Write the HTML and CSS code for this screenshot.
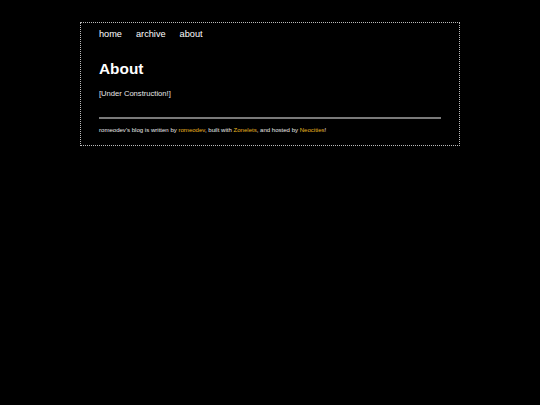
FILE: index.html
```html
<!DOCTYPE html>
<html>
<head>
<meta charset="utf-8">
<title>About</title>
<link rel="stylesheet" href="styles.css">
</head>
<body>
<div class="container">
  <nav class="nav">
    <a href="#">home</a>
    <a href="#">archive</a>
    <a href="#">about</a>
  </nav>
  <main class="content">
    <h1 class="title">About</h1>
    <p class="text">[Under Construction!]</p>
  </main>
  <footer class="footer">
    <hr class="rule">
    <p class="credit">romeodev's blog is written by <a class="link" href="#">romeodev</a>, built with <a class="link" href="#">Zonelets</a>, and hosted by <a class="link" href="#">Neocities</a>!</p>
  </footer>
</div>
</body>
</html>
```

FILE: styles.css
```css
html, body {
  margin: 0;
  padding: 0;
  background: #000;
}
body {
  font-family: "Liberation Sans", Arial, sans-serif;
  color: #e8e8e8;
  font-size: 7.6px;
}
.container {
  width: 342px;
  margin: 22px auto 0;
  padding: 4px 18px 10px;
  border: 1px dotted #bbb;
}
.nav {
  display: flex;
  gap: 14px;
  font-size: 9.2px;
  line-height: 14px;
}
.nav a {
  color: #fff;
  text-decoration: none;
}
.content {
  margin-top: 18px;
}
.title {
  font-size: 15.4px;
  font-weight: bold;
  color: #fff;
  margin: 0;
  line-height: 20px;
}
.text {
  margin: 9px 0 0;
  line-height: 12px;
}
.footer {
  margin-top: 17px;
}
.rule {
  margin: 0;
  border: 0;
  height: 2px;
  background: #7a7a7a;
}
.credit {
  margin: 7px 0 0;
  font-size: 6.05px;
  line-height: 9px;
}
.link {
  color: #e8b520;
  text-decoration: none;
}
```
